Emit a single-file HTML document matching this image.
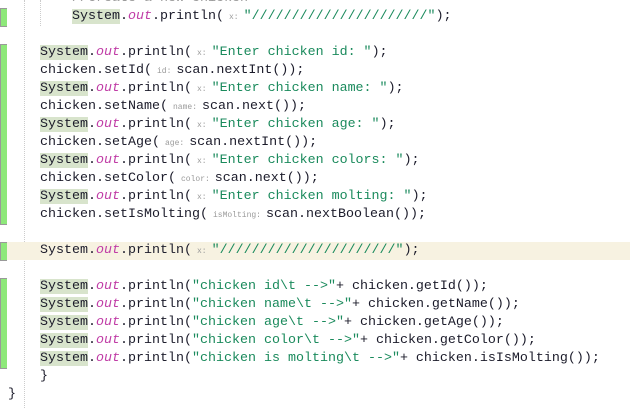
<!DOCTYPE html>
<html><head><style>
body{margin:0;width:630px;height:408px;overflow:hidden;background:#fff;position:relative;font-family:"Liberation Mono",monospace;font-size:13.33px;color:#1b1b2a}
.ln{position:absolute;left:0;width:630px;height:18px;line-height:18px;white-space:pre}
.s{color:#1a8a5c}.o{color:#c03ca6;font-style:italic}.c{color:#9a9a9a}
.S{background:#d8e4cc}
.h{display:inline-block;font-size:8px;color:#9a9a9a;padding:0 5px;vertical-align:top;line-height:19px}
.g{position:absolute;left:0;width:6px;background:#8ee87a;border:1px solid #999;border-right:none}
.dot{position:absolute;border-left:1px dotted #ccc}
</style></head><body>
<div class="dot" style="left:24px;top:0;height:408px"></div>
<div class="dot" style="left:40px;top:0;height:26px"></div>
<div class="ln" style="top:242px;background:#f7f2e1"></div>
<div class="g" style="top:8px;height:17px"></div>
<div class="g" style="top:44px;height:179px"></div>
<div class="g" style="top:242px;height:17px"></div>
<div class="g" style="top:278px;height:89px"></div>
<div class="ln" style="top:-10px;left:72px"><span class="c">//Create a new chicken</span></div>
<div class="ln" style="top:8px;left:72px"><span class="S">System</span>.<span class="o">out</span>.println(<span class="h">x:</span><span class="s">"//////////////////////"</span>);</div>
<div class="ln" style="top:44px;left:40px"><span class="S">System</span>.<span class="o">out</span>.println(<span class="h">x:</span><span class="s">"Enter chicken id: "</span>);</div>
<div class="ln" style="top:62px;left:40px">chicken.setId(<span class="h">id:</span>scan.nextInt());</div>
<div class="ln" style="top:80px;left:40px"><span class="S">System</span>.<span class="o">out</span>.println(<span class="h">x:</span><span class="s">"Enter chicken name: "</span>);</div>
<div class="ln" style="top:98px;left:40px">chicken.setName(<span class="h">name:</span>scan.next());</div>
<div class="ln" style="top:116px;left:40px"><span class="S">System</span>.<span class="o">out</span>.println(<span class="h">x:</span><span class="s">"Enter chicken age: "</span>);</div>
<div class="ln" style="top:134px;left:40px">chicken.setAge(<span class="h">age:</span>scan.nextInt());</div>
<div class="ln" style="top:152px;left:40px"><span class="S">System</span>.<span class="o">out</span>.println(<span class="h">x:</span><span class="s">"Enter chicken colors: "</span>);</div>
<div class="ln" style="top:170px;left:40px">chicken.setColor(<span class="h">color:</span>scan.next());</div>
<div class="ln" style="top:188px;left:40px"><span class="S">System</span>.<span class="o">out</span>.println(<span class="h">x:</span><span class="s">"Enter chicken molting: "</span>);</div>
<div class="ln" style="top:206px;left:40px">chicken.setIsMolting(<span class="h">isMolting:</span>scan.nextBoolean());</div>
<div class="ln" style="top:242px;left:40px;width:590px">System.<span class="o">out</span>.println(<span class="h">x:</span><span class="s">"//////////////////////"</span>);</div>
<div class="ln" style="top:278px;left:40px"><span class="S">System</span>.<span class="o">out</span>.println(<span class="s">"chicken id\t --&gt;"</span>+ chicken.getId());</div>
<div class="ln" style="top:296px;left:40px"><span class="S">System</span>.<span class="o">out</span>.println(<span class="s">"chicken name\t --&gt;"</span>+ chicken.getName());</div>
<div class="ln" style="top:314px;left:40px"><span class="S">System</span>.<span class="o">out</span>.println(<span class="s">"chicken age\t --&gt;"</span>+ chicken.getAge());</div>
<div class="ln" style="top:332px;left:40px"><span class="S">System</span>.<span class="o">out</span>.println(<span class="s">"chicken color\t --&gt;"</span>+ chicken.getColor());</div>
<div class="ln" style="top:350px;left:40px"><span class="S">System</span>.<span class="o">out</span>.println(<span class="s">"chicken is molting\t --&gt;"</span>+ chicken.isIsMolting());</div>
<div class="ln" style="top:368px;left:40px">}</div>
<div class="ln" style="top:386px;left:8px">}</div>
</body></html>
